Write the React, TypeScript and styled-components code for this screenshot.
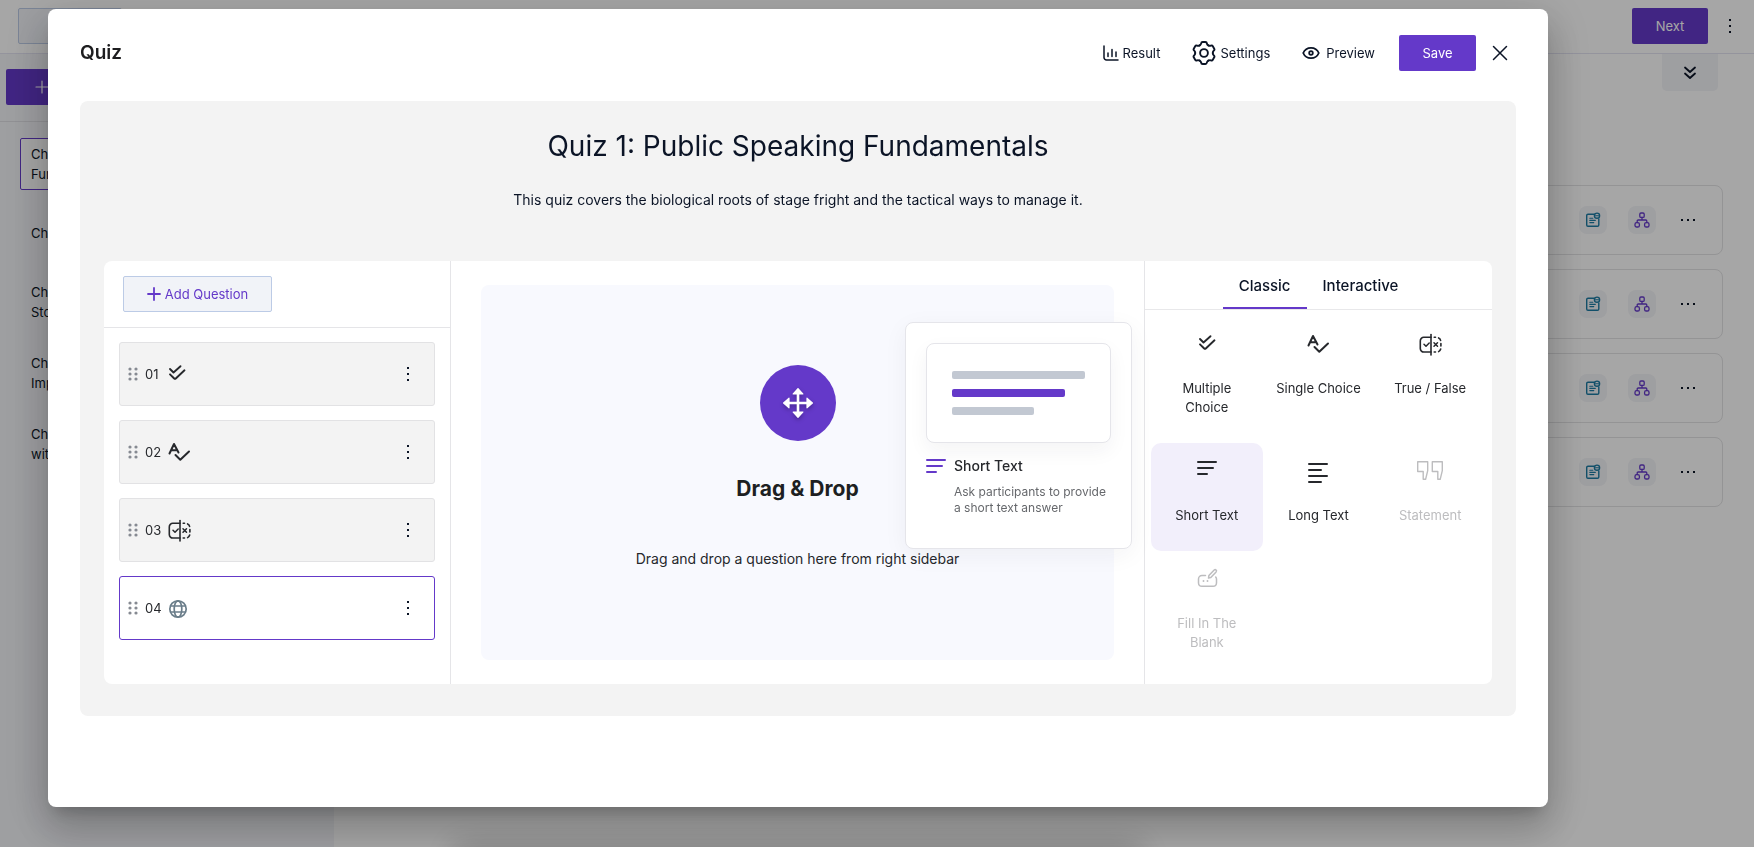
import React from "react";
import styled, { createGlobalStyle, css } from "styled-components";

const purple = "#6439c9";
const ink = "#0b1426";
const text = "#26282c";

const GlobalStyle = createGlobalStyle`
  *, *::before, *::after { box-sizing: border-box; }
  body {
    margin: 0;
    background: #fff;
    color: ${text};
    font-family: Inter, "Liberation Sans", sans-serif;
    font-size: 13px;
    line-height: 20px;
  }
  button { font: inherit; color: inherit; border: 0; background: none; padding: 0; cursor: pointer; }
  h1, h2, h3, p, ul, ol { margin: 0; padding: 0; font-weight: 400; list-style: none; }
  svg { display: block; flex: none; }
`;

/* ---------- Course page behind the dialog ---------- */

const Page = styled.div`
  min-height: 100vh;
  display: flex;
  flex-direction: column;
`;

const TopBar = styled.header`
  height: 54px;
  padding: 7px 16px 9px 18px;
  display: flex;
  justify-content: space-between;
  align-items: center;
  border-bottom: 1px solid #e3e3f2;
`;

const TopActions = styled.div`
  display: flex;
  align-items: center;
  gap: 14px;
`;

const Button = styled.button<{ $variant?: "solid" | "soft"; $width: number }>`
  width: ${(p) => p.$width}px;
  height: 36px;
  display: flex;
  align-items: center;
  justify-content: center;
  gap: 4px;
  border-radius: 2px;
  ${(p) =>
    p.$variant === "soft"
      ? css`
          color: ${purple};
          background: #f1f3f8;
          border: 1px solid #bccbe6;
        `
      : css`
          color: #fff;
          background: ${purple};
        `}
`;

const IconButton = styled.button<{ $width: number }>`
  width: ${(p) => p.$width}px;
  height: 28px;
  display: flex;
  align-items: center;
  justify-content: center;
  color: ${ink};
`;

const Body = styled.div`
  flex: 1;
  display: flex;
`;

const SideNav = styled.nav`
  flex: 0 0 334px;
  background: #f3f4f8;
`;

const SideNavHead = styled.div`
  padding: 15px 6px 16px;
  border-bottom: 1px solid #dfdfe4;
`;

const Chapters = styled.ol`
  padding: 16px 20px;
  display: flex;
  flex-direction: column;
  gap: 19px;
`;

const Chapter = styled.li<{ $active?: boolean }>`
  width: 260px;
  min-height: 48px;
  padding: 5px 10px;
  display: flex;
  align-items: center;
  color: ${ink};
  white-space: pre-line;
  border: 1px solid ${(p) => (p.$active ? purple : "transparent")};
  background: ${(p) => (p.$active ? "#fff" : "transparent")};
  border-radius: 2px;
`;

const Main = styled.main`
  flex: 1;
  padding: 0 31px 0 40px;
  display: flex;
  flex-direction: column;
`;

const Collapse = styled.button`
  align-self: flex-end;
  width: 56px;
  height: 37px;
  margin: 0 5px 94px 0;
  display: flex;
  align-items: center;
  justify-content: center;
  color: ${ink};
  background: #f3f4f8;
  border-radius: 0 0 5px 5px;
`;

const Lessons = styled.ul`
  display: flex;
  flex-direction: column;
  gap: 14px;
`;

const Lesson = styled.li`
  height: 70px;
  padding: 0 23px;
  display: flex;
  align-items: center;
  justify-content: flex-end;
  gap: 21px;
  border: 1px solid #e3e3e5;
  border-radius: 8px;
`;

const LessonBadge = styled.button<{ $color: string }>`
  width: 28px;
  height: 28px;
  display: flex;
  align-items: center;
  justify-content: center;
  color: ${(p) => p.$color};
  background: #f3f4f8;
  border-radius: 8px;
`;

/* ---------- Dialog ---------- */

const Overlay = styled.div`
  position: fixed;
  inset: 0;
  display: flex;
  padding: 9px 206px 40px 48px;
  background: rgba(0, 0, 0, 0.35);
`;

/* Tray parked just below the window; only its shadow shows. */
const Tray = styled.div`
  position: fixed;
  top: 100%;
  left: 26%;
  right: 35%;
  height: 60px;
  box-shadow: 0 0 32px 2px rgba(0, 0, 0, 0.22);
`;

const Dialog = styled.section`
  position: relative;
  flex: 1;
  min-width: 0;
  padding: 26px 32px;
  background: #fff;
  border-radius: 8px;
  overflow: auto;
  box-shadow:
    0 11px 15px -7px rgba(0, 0, 0, 0.2),
    0 24px 38px 3px rgba(0, 0, 0, 0.14),
    0 9px 46px 8px rgba(0, 0, 0, 0.12);
`;

const DialogHead = styled.header`
  display: flex;
  align-items: center;
  justify-content: space-between;
  margin-bottom: 30px;
`;

const DialogTitle = styled.h1`
  font-size: 19px;
  line-height: 28px;
  font-weight: 600;
  color: #1d1d1f;
`;

const DialogActions = styled.div`
  display: flex;
  align-items: center;
`;

const TextButton = styled.button<{ $gap: number; $after: number }>`
  display: flex;
  align-items: center;
  gap: ${(p) => p.$gap}px;
  margin-right: ${(p) => p.$after}px;
  color: ${ink};
`;

const Close = styled(IconButton)`
  margin: 0 2px 0 10px;
`;

const Sheet = styled.div`
  padding: 26px 24px 32px;
  background: #f3f3f3;
  border-radius: 8px;
`;

const QuizTitle = styled.h2`
  font-size: 28px;
  line-height: 38px;
  text-align: center;
  color: ${ink};
`;

const QuizIntro = styled.p`
  margin: 25px 0 51px;
  font-size: 14px;
  text-align: center;
  color: ${ink};
`;

const Builder = styled.div`
  display: grid;
  grid-template-columns: minmax(0, 1fr) minmax(0, 2fr) minmax(0, 1fr);
  background: #fff;
  border-radius: 8px;
`;

const Column = styled.div`
  border-right: 1px solid #e5e5e8;
  &:last-child { border-right: 0; }
`;

const AddRow = styled.div`
  padding: 15px 19px;
  border-bottom: 1px solid #e5e5e8;
`;

const Questions = styled.ol`
  padding: 14px 15px;
  display: flex;
  flex-direction: column;
  gap: 14px;
`;

const Question = styled.li<{ $active?: boolean }>`
  height: 64px;
  padding: 0 12px 0 8px;
  display: flex;
  align-items: center;
  border: 1px solid ${(p) => (p.$active ? purple : "#e2e2e4")};
  background: ${(p) => (p.$active ? "#fff" : "#f3f3f3")};
  border-radius: 3px;
`;

const QuestionNumber = styled.span`
  margin: 0 4px 0 7px;
  flex: none;
`;

const QuestionMenu = styled(IconButton)`
  margin-left: auto;
`;

const DropColumn = styled(Column)`
  position: relative;
  display: flex;
  padding: 24px 30px;
`;

const DropZone = styled.div`
  flex: 1;
  display: flex;
  flex-direction: column;
  align-items: center;
  padding-top: 80px;
  background: #f8f9fe;
  border-radius: 8px;
`;

const DropIcon = styled.div`
  width: 76px;
  height: 76px;
  display: flex;
  align-items: center;
  justify-content: center;
  color: #fff;
  background: ${purple};
  border-radius: 50%;
  svg { filter: drop-shadow(0 2px 2px rgba(0, 0, 0, 0.3)); }
`;

const DropTitle = styled.h3`
  margin: 32px 0 44px;
  font-size: 21px;
  line-height: 32px;
  font-weight: 700;
  color: #1d1f22;
`;

const DropHint = styled.p`
  font-size: 14px;
`;

const Preview = styled.aside`
  position: absolute;
  top: 61px;
  right: 12px;
  width: 227px;
  height: 227px;
  padding: 20px;
  background: #fff;
  border: 1px solid #e5e5ea;
  border-radius: 8px;
  box-shadow: 0 6px 24px rgba(30, 30, 60, 0.05);
`;

const PreviewCard = styled.div`
  height: 100px;
  padding: 27px 25px;
  display: flex;
  flex-direction: column;
  gap: 10px;
  background: #fff;
  border: 1px solid #e5e5ea;
  border-radius: 8px;
  box-shadow: 0 8px 20px rgba(30, 30, 60, 0.05);
`;

const PreviewBar = styled.div<{ $width: number; $active?: boolean }>`
  width: ${(p) => p.$width}px;
  height: 8px;
  background: ${(p) => (p.$active ? purple : "#c2c8d2")};
  border-radius: 2px;
`;

const PreviewBody = styled.div`
  display: flex;
  gap: 8px;
  padding-top: 13px;
  color: ${purple};
`;

const PreviewName = styled.h3`
  margin-bottom: 8px;
  font-size: 14px;
  font-weight: 500;
  color: ${text};
`;

const PreviewText = styled.p`
  font-size: 12px;
  line-height: 16px;
  color: #66686c;
`;

const PreviewCaption = styled.div`
  flex: none;
  width: 160px;
`;

const Tabs = styled.div`
  display: flex;
  justify-content: center;
  border-bottom: 1px solid #e8e8ea;
`;

const Tab = styled.button<{ $active?: boolean }>`
  height: 48px;
  padding: 4px 16px 0;
  font-size: 15px;
  font-weight: 500;
  color: ${ink};
  border-bottom: 2px solid ${(p) => (p.$active ? purple : "transparent")};
`;

const Tiles = styled.div`
  display: grid;
  grid-template-columns: repeat(3, minmax(0, 1fr));
  padding: 6px;
`;

const Tile = styled.button<{ $active?: boolean }>`
  min-height: 108px;
  padding: 14px 12px 26px;
  display: flex;
  flex-direction: column;
  align-items: center;
  gap: 21px;
  line-height: 19px;
  color: ${text};
  background: ${(p) => (p.$active ? "#f2effb" : "transparent")};
  border-radius: 10px;
  &:disabled { color: #bdbdbf; cursor: default; }
`;

/* ---------- Icons ---------- */

type Box = { w: number; h?: number; children: React.ReactNode; sw?: number };

const Drawing = ({ w, h = w, sw = 2, children }: Box) => (
  <svg
    width={w}
    height={h}
    viewBox={`0 0 ${w} ${h}`}
    fill="none"
    stroke="currentColor"
    strokeWidth={sw}
    strokeLinecap="round"
    strokeLinejoin="round"
    aria-hidden="true"
  >
    {children}
  </svg>
);

const Plus = ({ light }: { light?: boolean }) => (
  <Drawing w={14} sw={light ? 1.2 : 1.8}>
    <path d="M7 1v12M1 7h12" />
  </Drawing>
);

const Dots = ({ horizontal }: { horizontal?: boolean }) => (
  <svg width={horizontal ? 14 : 2} height={horizontal ? 2 : 14} fill="currentColor" aria-hidden="true">
    {[0, 6, 12].map((n) => (
      <rect key={n} x={horizontal ? n : 0} y={horizontal ? 0 : n} width="2" height="2" />
    ))}
  </svg>
);

const Grip = () => (
  <svg width="10" height="16" fill="#868a92" aria-hidden="true">
    {[2, 8].map((x) => [3, 8, 13].map((y) => <circle key={`${x}-${y}`} cx={x} cy={y} r="1.6" />))}
  </svg>
);

const DoubleChevron = () => (
  <Drawing w={14} sw={1.8}>
    <path d="M2 1.500l5 4.500 5-4.500M2 7.500l5 4.500 5-4.500" />
  </Drawing>
);

const NoteIcon = () => (
  <Drawing w={16} sw={1.4}>
    <path d="M9.500 2.200H3A1.300 1.300 0 0 0 1.700 3.500v9.500A1.300 1.300 0 0 0 3 14.300h9.500a1.300 1.300 0 0 0 1.300-1.300V7" />
    <circle cx="12" cy="3.700" r="2.600" />
    <path d="M10.500 3.700h3M4.800 6.200h3M4.800 8.400h5.500M4.800 10.600h4" strokeWidth="1.100" />
  </Drawing>
);

const TreeIcon = () => (
  <Drawing w={16} sw={1.3}>
    <rect x="5.800" y="1" width="4.400" height="4.400" rx="1.200" />
    <rect x="1" y="10.600" width="4.400" height="4.400" rx="1.600" />
    <rect x="10.600" y="10.600" width="4.400" height="4.400" rx="1.600" />
    <path d="M8 5.500V8M3.200 10.500V9A1 1 0 0 1 4.200 8h7.600a1 1 0 0 1 1 1v1.500" />
  </Drawing>
);

const ChartIcon = () => (
  <Drawing w={16} sw={1.5}>
    <path d="M1 1v11.500A2.500 2.500 0 0 0 3.500 15H15" />
    <path d="M5 8v3.500M9 4.500v7M13 7v4.500" />
  </Drawing>
);

const GearIcon = () => (
  <Drawing w={24} sw={1.9}>
    <g transform="translate(12 12)">
      {[0, 60, 120, 180, 240, 300].map((angle) => (
        <path
          key={angle}
          transform={`rotate(${angle})`}
          d="M-4.400 -7.600C-3.500 -8.100 -3 -8.600 -2.900 -9.500Q-2.700 -11 -1.400 -11H1.400Q2.700 -11 2.900 -9.500C3 -8.600 3.500 -8.100 4.400 -7.600"
        />
      ))}
      <circle r="3.900" />
    </g>
  </Drawing>
);

const EyeIcon = () => (
  <Drawing w={18} h={14} sw={1.8}>
    <path d="M1.200 7C2.700 3.500 5.500 1.800 9 1.800S15.300 3.500 16.800 7C15.300 10.500 12.500 12.200 9 12.200S2.700 10.500 1.200 7z" />
    <circle cx="9" cy="7" r="1.800" />
  </Drawing>
);

const CrossIcon = () => (
  <Drawing w={16} sw={1.5}>
    <path d="M1.500 1.500l13 13M14.500 1.500l-13 13" />
  </Drawing>
);

const MoveIcon = () => (
  <Drawing w={32} sw={1.2}>
    <path d="M16 5v22M5 16h22" strokeWidth="2.600" />
    <g fill="currentColor">
      <path d="M16 1.600L20.800 7H11.200z" />
      <path d="M16 30.400L20.800 25H11.200z" />
      <path d="M1.600 16L7 11.200V20.800z" />
      <path d="M30.400 16L25 11.200V20.800z" />
    </g>
  </Drawing>
);

const MultipleIcon = () => (
  <Drawing w={28} sw={1.9}>
    <path d="M7 9l3.500 3.500 7-6.300M7 14.300l4.200 4.200q.8.600 1.600 0l8.700-8.200" />
  </Drawing>
);

const SingleIcon = () => (
  <Drawing w={28} sw={2}>
    <path d="M4.500 15.500L9 6l4.500 8.500M6.300 12.200h5.500" />
    <path d="M10.500 17l4.800 4.800L24 13.500" />
  </Drawing>
);

const TrueFalseIcon = () => (
  <Drawing w={28} sw={1.6}>
    <path d="M15 4.500v20.500" />
    <path d="M15 7.300H8A3.500 3.500 0 0 0 4.300 11v7.500A3.500 3.500 0 0 0 8 22h7" />
    <path d="M8 14.200l2 2 3.200-3.200M18 12.800l3.500 3.500M21.500 12.800L18 16.300" strokeWidth="1.500" />
    <path d="M18.200 7.300h1.300M22.600 7.900q1.800.8 2 2.600M24.900 13.500v2.500M24.700 19q-.5 1.800-2.100 2.600M19.500 22h-1.300" />
  </Drawing>
);

const ShortTextIcon = () => (
  <Drawing w={28} sw={2}>
    <path d="M5 5h18M5 11h15M5 17h9" />
  </Drawing>
);

const LongTextIcon = () => (
  <Drawing w={28} sw={2}>
    <path d="M5 7h18M5 13h12M5 19h18M5 25h12" />
  </Drawing>
);

const StatementIcon = () => (
  <Drawing w={28} sw={1.4}>
    <path d="M1.700 4.700h10v9L9.600 22.300H7.200V14.500H1.700zM16.300 4.700h10v9l-2.100 8.600h-2.400V14.500h-5.500z" />
  </Drawing>
);

const FillBlankIcon = () => (
  <Drawing w={28} sw={1.5}>
    <path d="M12.500 10.500H9A3.500 3.500 0 0 0 5.500 14v4A3.500 3.500 0 0 0 9 21.300h11a3.500 3.500 0 0 0 3.500-3.300v-4q0-1-.8-2" />
    <path d="M15.500 13l.4-2.400 5.300-5.600q1-.8 1.900 0t0 1.900l-5.300 5.600z" />
    <path d="M10.500 16v.1M14.500 16v.1" strokeWidth="1.900" />
  </Drawing>
);

const GlobeIcon = () => (
  <Drawing w={28} sw={1.7}>
    <g stroke="#6b7e8a">
      <circle cx="12" cy="15" r="8.200" />
      <ellipse cx="12" cy="15" rx="3.800" ry="8.200" />
      <path d="M4.500 12h15M4.500 18h15" strokeWidth="1.500" />
    </g>
  </Drawing>
);

/* ---------- Data ---------- */

const chapters = [
  "Chapter 1:\nFundamentals",
  "Chapter 2",
  "Chapter 3:\nStories",
  "Chapter 4:\nImpact",
  "Chapter 5\nwith",
];

const questions = [
  { number: "01", icon: <MultipleIcon /> },
  { number: "02", icon: <SingleIcon /> },
  { number: "03", icon: <TrueFalseIcon /> },
  { number: "04", icon: <GlobeIcon />, active: true },
];

const questionTypes = [
  { name: "Multiple Choice", icon: <MultipleIcon /> },
  { name: "Single Choice", icon: <SingleIcon /> },
  { name: "True / False", icon: <TrueFalseIcon /> },
  { name: "Short Text", icon: <ShortTextIcon />, active: true },
  { name: "Long Text", icon: <LongTextIcon /> },
  { name: "Statement", icon: <StatementIcon />, disabled: true },
  { name: "Fill In The Blank", icon: <FillBlankIcon />, disabled: true },
];

/* ---------- Screens ---------- */

const CoursePage = () => (
  <Page>
    <TopBar>
      <Button $variant="soft" $width={104} aria-label="Add">
        <Plus />
      </Button>
      <TopActions>
        <Button $width={76}>Next</Button>
        <IconButton $width={16} aria-label="More">
          <Dots />
        </IconButton>
      </TopActions>
    </TopBar>
    <Body>
      <SideNav>
        <SideNavHead>
          <Button $width={72} aria-label="Add chapter">
            <Plus light />
          </Button>
        </SideNavHead>
        <Chapters>
          {chapters.map((name, i) => (
            <Chapter key={name} $active={i === 0}>
              {name}
            </Chapter>
          ))}
        </Chapters>
      </SideNav>
      <Main>
        <Collapse aria-label="Expand">
          <DoubleChevron />
        </Collapse>
        <Lessons>
          {[1, 2, 3, 4].map((n) => (
            <Lesson key={n}>
              <LessonBadge $color="#1c7ba3" aria-label="Notes">
                <NoteIcon />
              </LessonBadge>
              <LessonBadge $color={purple} aria-label="Outline">
                <TreeIcon />
              </LessonBadge>
              <IconButton $width={22} aria-label="More">
                <Dots horizontal />
              </IconButton>
            </Lesson>
          ))}
        </Lessons>
      </Main>
    </Body>
  </Page>
);

const QuizDialog = () => (
  <Overlay>
    <Tray />
    <Dialog role="dialog" aria-modal="true" aria-labelledby="quiz-heading">
      <DialogHead>
        <DialogTitle id="quiz-heading">Quiz</DialogTitle>
        <DialogActions>
          <TextButton $gap={4} $after={32}>
            <ChartIcon />
            Result
          </TextButton>
          <TextButton $gap={4} $after={32}>
            <GearIcon />
            Settings
          </TextButton>
          <TextButton $gap={6} $after={24}>
            <EyeIcon />
            Preview
          </TextButton>
          <Button $width={77}>Save</Button>
          <Close $width={28} aria-label="Close">
            <CrossIcon />
          </Close>
        </DialogActions>
      </DialogHead>

      <Sheet>
        <QuizTitle>Quiz 1: Public Speaking Fundamentals</QuizTitle>
        <QuizIntro>
          This quiz covers the biological roots of stage fright and the tactical ways to manage it.
        </QuizIntro>

        <Builder>
          <Column>
            <AddRow>
              <Button $variant="soft" $width={149}>
                <Plus />
                Add Question
              </Button>
            </AddRow>
            <Questions>
              {questions.map((q) => (
                <Question key={q.number} $active={q.active}>
                  <Grip />
                  <QuestionNumber>{q.number}</QuestionNumber>
                  {q.icon}
                  <QuestionMenu $width={28} aria-label={`Options for question ${q.number}`}>
                    <Dots />
                  </QuestionMenu>
                </Question>
              ))}
            </Questions>
          </Column>

          <DropColumn>
            <DropZone>
              <DropIcon>
                <MoveIcon />
              </DropIcon>
              <DropTitle>Drag &amp; Drop</DropTitle>
              <DropHint>Drag and drop a question here from right sidebar</DropHint>
            </DropZone>
            <Preview>
              <PreviewCard>
                <PreviewBar $width={133} />
                <PreviewBar $width={113} $active />
                <PreviewBar $width={82} />
              </PreviewCard>
              <PreviewBody>
                <Drawing w={20}>
                  <path d="M1 4h18M1 10h15M1 16h9" />
                </Drawing>
                <PreviewCaption>
                  <PreviewName>Short Text</PreviewName>
                  <PreviewText>Ask participants to provide a short text answer</PreviewText>
                </PreviewCaption>
              </PreviewBody>
            </Preview>
          </DropColumn>

          <Column>
            <Tabs role="tablist">
              <Tab role="tab" aria-selected="true" $active>
                Classic
              </Tab>
              <Tab role="tab" aria-selected="false">
                Interactive
              </Tab>
            </Tabs>
            <Tiles>
              {questionTypes.map((t) => (
                <Tile key={t.name} $active={t.active} disabled={t.disabled}>
                  {t.icon}
                  {t.name}
                </Tile>
              ))}
            </Tiles>
          </Column>
        </Builder>
      </Sheet>
    </Dialog>
  </Overlay>
);

export default function App() {
  return (
    <>
      <GlobalStyle />
      <CoursePage />
      <QuizDialog />
    </>
  );
}
